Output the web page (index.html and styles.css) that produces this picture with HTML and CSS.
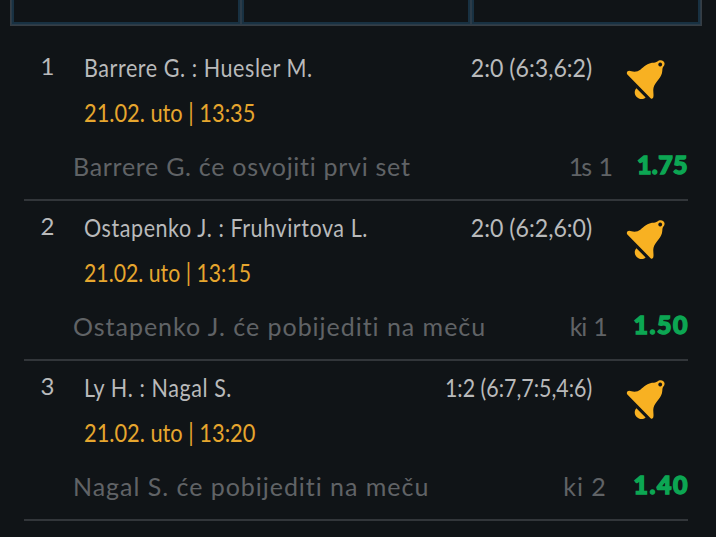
FILE: index.html
```
<!DOCTYPE html>
<html lang="hr">
<head>
    <meta charset="UTF-8">
    <meta name="viewport" content="width=device-width, initial-scale=1.0">
    <title>Listić</title>
    <link rel="stylesheet" href="styles.css">
</head>
<body>
    <svg width="0" height="0" class="defs">
        <symbol id="bell" viewBox="0 0 40 42">
            <path fill-rule="evenodd" d="M1.6 11.2 C0.6 12 0.5 13.8 1.6 14.8 L24.6 38.2 C25.6 39.2 27 38.6 27.3 37.3 C28 34 26.7 31 27.6 27.5 C28.8 22.5 34.6 18.5 36 13 C36.7 10 36 8 37.4 6.6 C39 4.6 39 2.6 37.4 1.2 C35.6 -.3 33 -.1 31.4 1.6 C29.6 3.2 27 2.4 23.5 3.4 C18 5 15.6 9.6 11.6 11.2 C8.6 12.2 5 11.4 3.2 10.8 Z M34.2 2.6 a1.9 1.9 0 1 0 .01 0 Z"/>
            <path d="M10.4 28.2 L19.6 37.4 C17 39.9 13 39.4 10.7 37 C8.3 34.5 8 30.8 10.4 28.2 Z"/>
        </symbol>
    </svg>

    <div class="tabs">
        <div class="tab"></div>
        <div class="tab"></div>
        <div class="tab"></div>
    </div>

    <div class="ticket">
        <div class="match">
            <div class="number">1</div>
            <div class="info">
                <div class="teams"><span>Barrere G. : Huesler M.</span></div>
                <div class="date"><span>21.02. uto | 13:35</span></div>
            </div>
            <div class="score"><span>2:0 (6:3,6:2)</span></div>
            <svg class="bell"><use href="#bell"/></svg>
            <div class="bet">
                <span class="pick set">Barrere G. će osvojiti prvi set</span>
                <span class="code set">1s 1</span>
                <span class="odds set">1.75</span>
            </div>
        </div>

        <div class="match">
            <div class="number">2</div>
            <div class="info">
                <div class="teams"><span>Ostapenko J. : Fruhvirtova L.</span></div>
                <div class="date"><span class="tight">21.02. uto | 13:15</span></div>
            </div>
            <div class="score"><span>2:0 (6:2,6:0)</span></div>
            <svg class="bell"><use href="#bell"/></svg>
            <div class="bet">
                <span class="pick">Ostapenko J. će pobijediti na meču</span>
                <span class="code tight">ki 1</span>
                <span class="odds">1.50</span>
            </div>
        </div>

        <div class="match">
            <div class="number">3</div>
            <div class="info">
                <div class="teams"><span>Ly H. : Nagal S.</span></div>
                <div class="date"><span>21.02. uto | 13:20</span></div>
            </div>
            <div class="score"><span class="tight">1:2 (6:7,7:5,4:6)</span></div>
            <svg class="bell"><use href="#bell"/></svg>
            <div class="bet">
                <span class="pick">Nagal S. će pobijediti na meču</span>
                <span class="code">ki 2</span>
                <span class="odds">1.40</span>
            </div>
        </div>
    </div>
</body>
</html>
```
FILE: styles.css
```
body {
    margin: 0;
    height: 537px;
    overflow: hidden;
    background-color: #101417;
    color: #b9babb;
    font-family: Lato, sans-serif;
    font-size: 25px;
    line-height: 44px;
    font-variant-ligatures: none;
}

.defs {
    display: block;
}

.tabs {
    display: grid;
    grid-template-columns: 1fr 1fr 1fr;
    gap: 6px;
    width: 692px;
    height: 26px;
    margin-left: 10px;
    padding: 0 3px 3px;
    box-sizing: border-box;
    background: #2b3b48;
    border: 1px solid #363d43;
    border-top: none;
}

.tab {
    background-color: #101417;
    box-shadow: 0 0 0 2px #183142;
}

.ticket {
    margin: 15px 28px 0 24px;
}

.match {
    display: grid;
    grid-template-columns: 60px 1fr auto 96px;
    grid-template-rows: 93px 61px;
    height: 160px;
    padding-top: 4px;
    box-sizing: border-box;
    border-bottom: 2px solid #32363a;
}

.number {
    width: 47px;
    text-align: center;
    font-size: 24px;
    line-height: 42px;
}

.teams span,
.date span,
.score span {
    display: inline-block;
    white-space: nowrap;
    transform: scaleX(0.86);
    transform-origin: left;
}

.teams span {
    letter-spacing: 0.66px;
}

.date {
    color: #e6a62e;
    line-height: 46px;
}

.date span {
    transform: scaleX(0.872);
}

.date .tight {
    transform: scaleX(0.85);
}

.score span {
    transform: scaleX(0.925);
    transform-origin: right;
}

.score .tight {
    transform: scaleX(0.855);
}

.bell {
    width: 40px;
    height: 42px;
    margin: 15px 0 0 34px;
    fill: #f8b122;
}

.bet {
    grid-column: 1 / 5;
    display: flex;
    padding-left: 49px;
    line-height: 56px;
    color: #606366;
}

.pick {
    flex: 1;
    letter-spacing: 0.97px;
}

.pick.set {
    letter-spacing: 0.71px;
}

.code {
    margin-right: 27px;
    letter-spacing: 0.9px;
}

.code.set {
    margin-right: 26px;
    letter-spacing: -2px;
    word-spacing: 4px;
}

.code.tight {
    letter-spacing: -1.2px;
    word-spacing: 2px;
}

.odds {
    color: #0ca653;
    font-weight: 900;
    line-height: 52px;
    letter-spacing: 1.5px;
    margin-right: -1px;
    -webkit-text-stroke: 1.4px #0ca653;
}

.odds.set {
    letter-spacing: 0.4px;
    margin-right: 0;
}
```
